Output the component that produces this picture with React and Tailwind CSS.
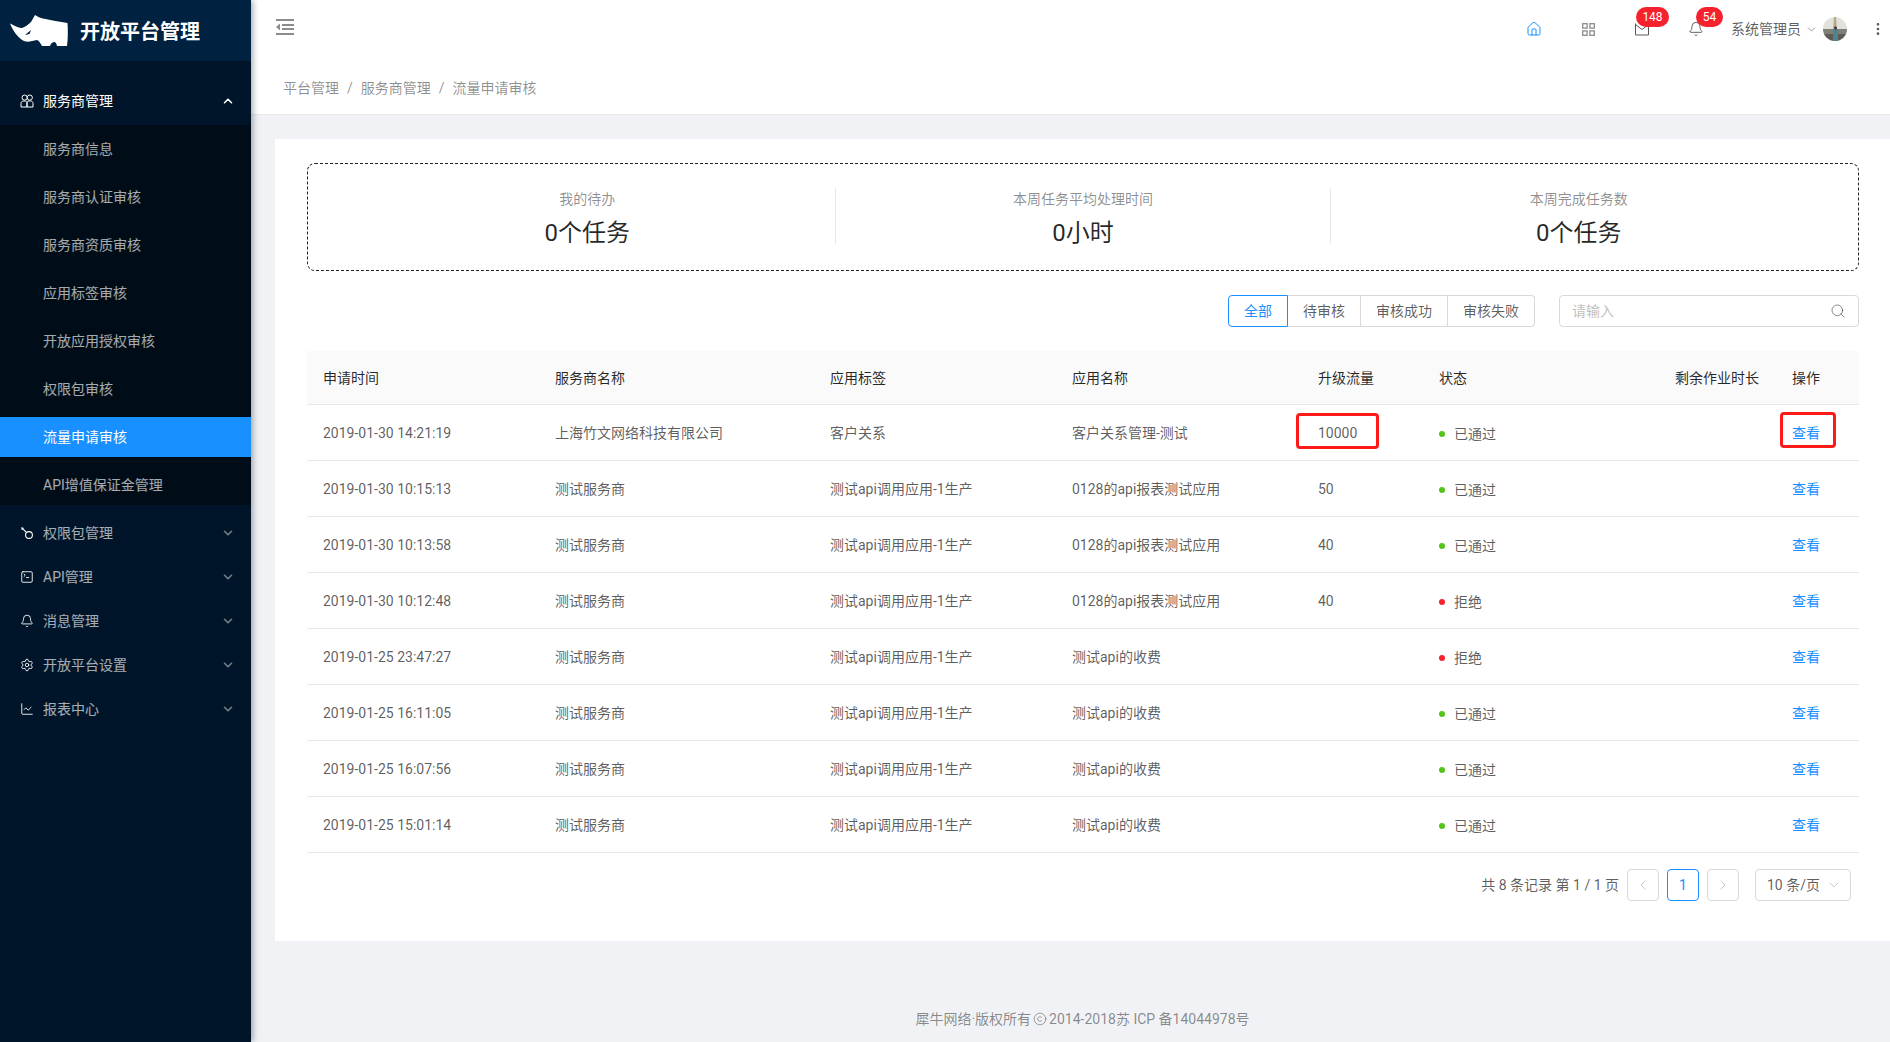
import { Bell, ChartLine, ChevronDown, ChevronLeft, ChevronRight, ChevronUp, Copyright, House, MoreVertical, Search, Settings, SquareTerminal } from "lucide-react";

const fontCls = "[font-family:Roboto,'Noto_Sans_CJK_SC',sans-serif]";

const subMenu = ["服务商信息", "服务商认证审核", "服务商资质审核", "应用标签审核", "开放应用授权审核", "权限包审核", "流量申请审核", "API增值保证金管理"];

const rows = [
  ["2019-01-30 14:21:19", "上海竹文网络科技有限公司", "客户关系", "客户关系管理-测试", "10000", true],
  ["2019-01-30 10:15:13", "测试服务商", "测试api调用应用-1生产", "0128的api报表测试应用", "50", true],
  ["2019-01-30 10:13:58", "测试服务商", "测试api调用应用-1生产", "0128的api报表测试应用", "40", true],
  ["2019-01-30 10:12:48", "测试服务商", "测试api调用应用-1生产", "0128的api报表测试应用", "40", false],
  ["2019-01-25 23:47:27", "测试服务商", "测试api调用应用-1生产", "测试api的收费", "", false],
  ["2019-01-25 16:11:05", "测试服务商", "测试api调用应用-1生产", "测试api的收费", "", true],
  ["2019-01-25 16:07:56", "测试服务商", "测试api调用应用-1生产", "测试api的收费", "", true],
  ["2019-01-25 15:01:14", "测试服务商", "测试api调用应用-1生产", "测试api的收费", "", true],
];

const columns = ["申请时间", "服务商名称", "应用标签", "应用名称", "升级流量", "状态", "剩余作业时长", "操作"];
const colWidths = ["w-[232px]", "w-[275px]", "w-[242px]", "w-[246px]", "w-[121px]", "w-[236px]", "w-[117px]", "w-[83px]"];

function Rhino() {
  return (
    <svg width="58" height="32" viewBox="0 0 58 32" fill="#fff">
      <path d="M0 8.5C5 11 9 13 12 13C15 12 18 10 21 7L25 0C28 2 30 3 33 3.5C41 5 50 7 57.5 8C58 15 58 24 57 31L47 31C46.5 29 46 27.5 44.5 27C42.5 27 41 28 40 31L32 31C30 28 29 25.5 27 25C22 26 18 27.5 14 26C8 23 3 16 0 8.5Z" />
      <path d="M15 20L21 15L19.5 19Z" fill="#002140" />
    </svg>
  );
}

function AppIcon() {
  return (
    <svg width="14" height="14" viewBox="0 0 14 14" fill="none" stroke="currentColor" strokeWidth="1">
      <circle cx="4.6" cy="3.6" r="2.6" />
      <circle cx="9.8" cy="3.6" r="2.6" />
      <path d="M1 13V9.5C1 8 2 7 3.5 7H5.5C6.5 7 7 8 7 9V13ZM7 13V9C7 8 7.5 7 8.5 7H10.5C12 7 13 8 13 9.5V13Z" />
    </svg>
  );
}

function KeyIcon() {
  return (
    <svg width="14" height="14" viewBox="0 0 14 14" fill="none" stroke="currentColor" strokeWidth="1.1">
      <circle cx="9" cy="9" r="3.4" />
      <path d="M6.6 6.6L1.5 1.5M1.5 3.6L3.4 1.8" />
    </svg>
  );
}

function GridIcon() {
  return (
    <svg width="13" height="13" viewBox="0 0 13 13" fill="none" stroke="#8c8c8c" strokeWidth="1.3">
      <rect x=".7" y=".7" width="4.4" height="4.4" />
      <rect x="7.9" y=".7" width="4.4" height="4.4" />
      <rect x=".7" y="7.9" width="4.4" height="4.4" />
      <rect x="7.9" y="7.9" width="4.4" height="4.4" />
    </svg>
  );
}

function MailIcon() {
  return (
    <svg width="14" height="14" viewBox="0 0 14 14" fill="none" stroke="#595959" strokeWidth="1">
      <path d="M.5 1.5V13H13.5V1.5" />
      <path d="M.5 2.5L7 7.5L13.5 2.5" />
    </svg>
  );
}

function FoldIcon() {
  return (
    <svg width="18" height="16" viewBox="0 0 18 16" fill="#8c8c8c">
      <rect x="0" y="0" width="18" height="2" />
      <rect x="6" y="5" width="12" height="2" />
      <rect x="6" y="9" width="12" height="2" />
      <rect x="0" y="14" width="18" height="2" />
      <path d="M4 4.5V11.5L0 8Z" />
    </svg>
  );
}

function Avatar() {
  return (
    <svg width="24" height="24" viewBox="0 0 24 24" className="rounded-full">
      <rect width="24" height="24" fill="#e2e1da" />
      <rect y="12" width="24" height="5" fill="#7c8075" />
      <path d="M10 14L11 0H13L14 14Z" fill="#b7a88c" />
      <rect y="17" width="24" height="7" fill="#5e5b57" />
      <rect x="10" y="12" width="5" height="12" fill="#4f8290" />
      <circle cx="12.5" cy="11" r="1.4" fill="#33302e" />
    </svg>
  );
}

function Badge({ text, className }) {
  return <span className={`absolute top-[7px] h-5 rounded-full bg-[#f5222d] text-center text-xs leading-5 text-white ${className}`}>{text}</span>;
}

function TopMenu({ icon: Icon, custom, label }) {
  return (
    <div className="mt-1 flex h-10 items-center pl-5 pr-4 text-white/65">
      <span className="mr-[9px] flex w-[14px] justify-center text-white">{custom ? custom : <Icon size={14} strokeWidth={1.5} />}</span>
      <span className="flex-1 text-sm">{label}</span>
      <ChevronDown size={14} strokeWidth={2.8} className="text-white/45" />
    </div>
  );
}

function Stat({ label, value }) {
  return (
    <div className="flex-1 text-center">
      <div className="text-sm leading-[22px] text-black/45">{label}</div>
      <div className="mt-[7px] text-2xl leading-8 text-black/85">{value}</div>
    </div>
  );
}

export default function App() {
  return (
    <div className={`flex min-h-screen bg-[#f0f2f5] text-sm text-black/65 ${fontCls}`}>
      <aside className="z-10 w-[251px] shrink-0 bg-[#001529] shadow-[2px_0_6px_rgba(0,21,41,0.35)]">
        <div className="flex h-[61px] items-center bg-[#002140] pl-[10px]">
          <Rhino />
          <span className="ml-3 pt-0.5 text-xl font-bold text-white">开放平台管理</span>
        </div>
        <div className="pt-4">
          <div className="flex h-12 items-center pl-5 pr-4 text-white">
            <span className="mr-[9px] flex w-[14px] justify-center"><AppIcon /></span>
            <span className="flex-1 text-sm">服务商管理</span>
            <ChevronUp size={14} strokeWidth={2.8} />
          </div>
          <div className="bg-[#000c17] pt-1">
            {subMenu.map((name) => (
              <div key={name} className={`mb-2 flex h-10 items-center pl-[43px] ${name === "流量申请审核" ? "bg-[#1890ff] text-white" : "text-white/65"}`}>
                {name}
              </div>
            ))}
          </div>
          <TopMenu custom={<KeyIcon />} label="权限包管理" />
          <TopMenu icon={SquareTerminal} label="API管理" />
          <TopMenu icon={Bell} label="消息管理" />
          <TopMenu icon={Settings} label="开放平台设置" />
          <TopMenu icon={ChartLine} label="报表中心" />
        </div>
      </aside>

      <div className="flex min-w-0 flex-1 flex-col">
        <header className="flex h-[61px] bg-white shadow-[0_1px_3px_rgba(0,21,41,0.06)]">
          <div className="pl-[25px] pt-[19px]"><FoldIcon /></div>
          <div className="ml-auto flex h-[58px] items-center pr-[4px]">
            <div className="flex">
              <span className="flex h-[58px] w-[54px] items-center justify-center text-[#1890ff]"><House size={16} strokeWidth={1.5} /></span>
              <span className="flex h-[58px] w-[54px] items-center justify-center"><GridIcon /></span>
              <span className="relative flex h-[58px] w-[54px] items-center justify-center">
                <MailIcon />
                <Badge text="148" className="left-[21px] w-[33px]" />
              </span>
              <span className="relative flex h-[58px] w-[54px] items-center justify-center text-[#595959]">
                <Bell size={16} strokeWidth={1.4} />
                <Badge text="54" className="left-[27px] w-[27px]" />
              </span>
            </div>
            <span className="ml-2 text-sm">系统管理员</span>
            <ChevronDown size={13} strokeWidth={1.6} className="ml-[4px] text-[#8c8c8c]" />
            <span className="ml-[5px]"><Avatar /></span>
            <MoreVertical size={16} strokeWidth={2} className="ml-[23px] text-[#595959]" />
          </div>
        </header>

        <div className="flex h-[54px] items-center border-b border-[#e8e8e8] bg-white pl-8 text-black/45">
          <span>平台管理</span>
          <span className="mx-2">/</span>
          <span>服务商管理</span>
          <span className="mx-2">/</span>
          <span>流量申请审核</span>
        </div>

        <main className="flex-1 pl-6 pt-6">
          <div className="h-[802px] bg-white pl-8 pr-[31px] pt-6">
            <div className="flex h-[108px] rounded-lg border border-dashed border-[#222] px-8 pt-6">
              <Stat label="我的待办" value="0个任务" />
              <div className="h-14 w-px bg-[#e8e8e8]" />
              <Stat label="本周任务平均处理时间" value="0小时" />
              <div className="h-14 w-px bg-[#e8e8e8]" />
              <Stat label="本周完成任务数" value="0个任务" />
            </div>

            <div className="mt-6 flex justify-end">
              <div className="flex h-8 text-sm">
                <span className="flex w-[60px] items-center justify-center rounded-l border border-[#1890ff] text-[#1890ff]">全部</span>
                <span className="flex w-[73px] items-center justify-center border border-l-0 border-[#d9d9d9]">待审核</span>
                <span className="flex w-[87px] items-center justify-center border border-l-0 border-[#d9d9d9]">审核成功</span>
                <span className="flex w-[87px] items-center justify-center rounded-r border border-l-0 border-[#d9d9d9]">审核失败</span>
              </div>
              <div className="ml-6 flex h-8 w-[300px] items-center rounded border border-[#d9d9d9] px-3">
                <span className="flex-1 text-[#bfbfbf]">请输入</span>
                <Search size={16} strokeWidth={1.5} className="text-black/45" />
              </div>
            </div>

            <table className="mt-6 w-[1552px] table-fixed border-collapse text-left">
              <colgroup>
                {colWidths.map((w) => <col key={w} className={w} />)}
              </colgroup>
              <thead>
                <tr className="h-[53px] border-b border-[#e8e8e8] bg-[#fafafa]">
                  {columns.map((c) => (
                    <th key={c} className="pl-4 pt-[2px] font-normal text-black/85">{c}</th>
                  ))}
                </tr>
              </thead>
              <tbody>
                {rows.map((row, i) => (
                  <tr key={row[0]} className="h-14 border-b border-[#e8e8e8]">
                    <td className="pl-4 pt-[2px]">{row[0]}</td>
                    <td className="pl-4 pt-[2px]">{row[1]}</td>
                    <td className="pl-4 pt-[2px]">{row[2]}</td>
                    <td className="pl-4 pt-[2px]">{row[3]}</td>
                    <td className="relative pl-4 pt-[2px]">
                      {row[4]}
                      {i === 0 && <span className="absolute left-[-6px] top-2 h-9 w-[83px] rounded-sm border-[3px] border-[#ff1a1a]" />}
                    </td>
                    <td className="pl-4 pt-1">
                      <span className="flex items-center">
                        <span className={`mr-[9px] h-1.5 w-1.5 rounded-full ${row[5] ? "bg-[#52c41a]" : "bg-[#f5222d]"}`} />
                        {row[5] ? "已通过" : "拒绝"}
                      </span>
                    </td>
                    <td />
                    <td className="relative pl-4 pt-[2px] text-[#1890ff]">
                      查看
                      {i === 0 && <span className="absolute left-1 top-[7px] h-9 w-14 rounded-sm border-[3px] border-[#ff1a1a]" />}
                    </td>
                  </tr>
                ))}
              </tbody>
            </table>

            <div className="mt-4 flex h-8 items-center justify-end pr-2">
              <span className="mr-2">共 8 条记录 第 1 / 1 页</span>
              <span className="flex h-8 w-8 items-center justify-center rounded border border-[#d9d9d9] text-[#bfbfbf]"><ChevronLeft size={16} strokeWidth={1.3} /></span>
              <span className="ml-2 flex h-8 w-8 items-center justify-center rounded border border-[#1890ff] text-[#1890ff]">1</span>
              <span className="ml-2 flex h-8 w-8 items-center justify-center rounded border border-[#d9d9d9] text-[#bfbfbf]"><ChevronRight size={16} strokeWidth={1.3} /></span>
              <span className="ml-4 flex h-8 w-[96px] items-center justify-between rounded border border-[#d9d9d9] pl-[11px] pr-2">
                10 条/页
                <ChevronDown size={16} strokeWidth={1.2} className="text-[#bfbfbf]" />
              </span>
            </div>
          </div>
        </main>

        <footer className="flex h-[100px] items-start justify-center pl-6 pt-[67px] text-black/45">
          <span className="flex items-center">犀牛网络·版权所有<Copyright size={14} strokeWidth={1.3} className="mx-[2px]" />2014-2018苏 ICP 备14044978号</span>
        </footer>
      </div>
    </div>
  );
}
